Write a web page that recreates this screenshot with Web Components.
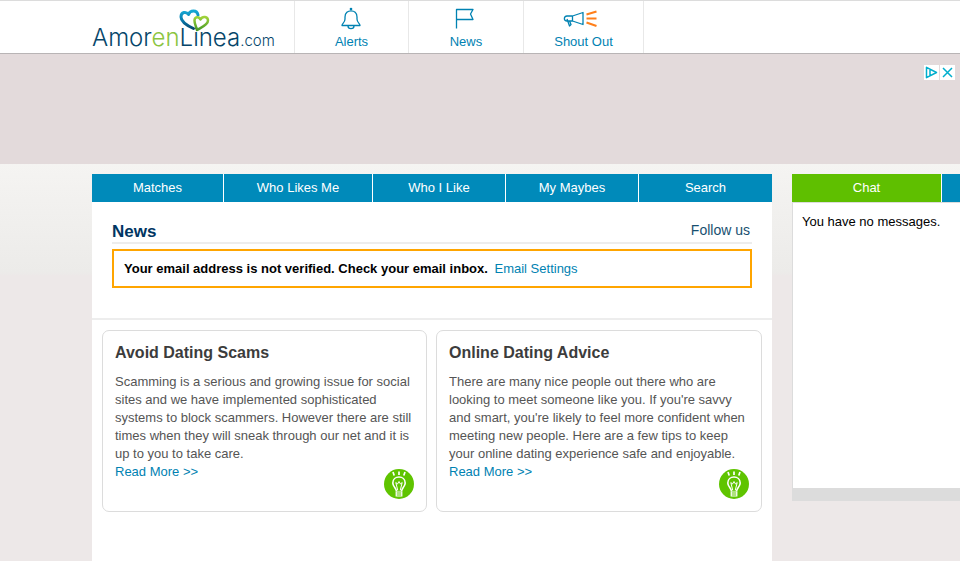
<!DOCTYPE html>
<html lang="en">
<head>
<meta charset="utf-8">
<meta name="viewport" content="width=device-width, initial-scale=1">
<title>AmorenLinea.com - News</title>
<style>
html { min-height: 100%; background: #ede8e8; }
body { margin: 0; font: 13px/18px "Liberation Sans", Arial, sans-serif; color: #000; --link: #0082b2; --blue: #008aba; --green: #5fbf00; --navy: #003562; }
</style>
</head>
<body>
<dating-app></dating-app>
<script>
function define(name, html) {
  const template = document.createElement('template');
  template.innerHTML = html;
  customElements.define(name, class extends HTMLElement {
    constructor() {
      super();
      this.attachShadow({ mode: 'open' }).append(template.content.cloneNode(true));
    }
    connectedCallback() {
      const link = this.shadowRoot.querySelector('a[data-host]');
      if (link) link.href = this.getAttribute('href') || '#';
    }
  });
}

define('site-logo', `
<style>
:host { display: block; }
a { position: relative; display: block; padding-top: 23px; color: #06466a; text-decoration: none; white-space: nowrap; font: 300 24px/28px Inter, Lato, sans-serif; }
.en { color: #8bc53f; }
small { font-size: 15px; line-height: 16px; }
svg { position: absolute; left: 86px; top: 7px; }
</style>
<a href="#" aria-label="AmorenLinea.com">
  <svg width="32" height="24" viewBox="0 0 32 24" fill="none" stroke-linejoin="round" stroke-linecap="round">
    <defs><linearGradient id="h" x1="0" y1="0" x2="0" y2="1"><stop offset="0" stop-color="#17a8d4"/><stop offset=".55" stop-color="#0878a9"/><stop offset="1" stop-color="#064b72"/></linearGradient>
    <linearGradient id="g" x1="0" y1="0" x2="0" y2="1"><stop offset="0" stop-color="#a0d33a"/><stop offset="1" stop-color="#489a26"/></linearGradient></defs>
    <path d="M15.500 20.500C10 18 3 14 3 9C3 4 8 3 10.500 6.500C12 2 19 1.500 20 7" stroke="url(#h)" stroke-width="3"/>
    <path d="M19 22C18 18 16.500 16 16.500 12.500C16.500 8.500 21 8 22.500 11.500C24.500 7.500 30 8.500 30 12.500C30 17 23 19.500 19 22Z" stroke="url(#g)" stroke-width="2.500"/>
  </svg>Amor<span class="en">en</span>Linea<small>.com</small>
</a>`);

define('header-link', `
<style>
:host { display: block; box-sizing: border-box; border-right: 1px solid #e8e8e8; }
a { display: flex; flex-direction: column; align-items: center; padding-top: 6px; color: var(--link); text-decoration: none; line-height: 18px; }
::slotted(svg) { display: block; height: 26px; }
</style>
<a data-host href="#"><slot name="icon"></slot><slot></slot></a>`);

define('site-header', `
<style>
:host { display: flex; box-sizing: border-box; min-height: 54px; padding-left: 92px; background: #fff; border-top: 1px solid #dcdcdc; border-bottom: 1px solid #b8b4b5; }
site-logo { box-sizing: border-box; width: 203px; border-right: 1px solid #e8e8e8; }
nav { display: grid; grid-template-columns: 114px 115px 120px; }
svg { fill: none; stroke: #0082b2; stroke-width: 1.300; stroke-linejoin: round; overflow: visible; }
</style>
<site-logo></site-logo>
<nav aria-label="Account">
  <header-link href="#alerts"><svg slot="icon" width="24" height="26" viewBox="1 1 24 26"><path d="M12 2v2M6 13V11C6 2.700 18 2.700 18 11V13C18 17 21 17 21 19.500H3C3 17 6 17 6 13ZM9 20C9 23.500 15 23.500 15 20"/><circle cx="12" cy="3" r=".7"/></svg>Alerts</header-link>
  <header-link href="#news"><svg slot="icon" width="24" height="26" viewBox="1 1 24 26"><path d="M3.500 22.500V3.500H20L17.500 8L20 13.500H3.500"/></svg>News</header-link>
  <header-link href="#shout"><svg slot="icon" width="36" height="26" viewBox="4 1 36 26"><path d="M10.500 10L21 6.500V18.500L10.500 15ZM10.500 10H5C1.500 10 1.500 15 5 15H10.500M5 13L7.500 20L9 18.500L7.500 15"/><path d="M24.500 8.500L34.500 5.500M24.500 12.500H34.500M24.500 16.500L34.500 20" stroke="#ff7f1a" stroke-width="2"/></svg>Shout Out</header-link>
</nav>`);

define('ad-banner', `
<style>
:host { display: flex; box-sizing: border-box; min-height: 110px; justify-content: flex-end; align-items: flex-start; gap: 1px; padding: 11px 5px; background: #e3dadb; }
button { display: block; width: 15px; height: 15px; padding: 0; border: 0; background: #fff; }
svg { display: block; fill: none; stroke: #00aecd; stroke-width: 1.500; }
</style>
<button type="button" aria-label="About this ad"><svg width="15" height="15" viewBox="0 0 15 15"><path d="M2.500 2.300L12.500 7.500L2.500 12.700ZM6 5V10.500" stroke-linejoin="round"/></svg></button>
<button type="button" aria-label="Close ad"><svg width="15" height="15" viewBox="0 0 15 15"><path d="M3 3L12 12M12 3L3 12"/></svg></button>`);

define('nav-tab', `
<style>
:host { display: block; background: var(--blue); }
:host([active]) { background: var(--green); }
a { display: block; line-height: 28px; min-height: 28px; color: #fff; text-align: center; text-decoration: none; white-space: nowrap; }
</style>
<a data-host href="#"><slot></slot></a>`);

define('tip-card', `
<style>
:host { display: flex; flex-direction: column; box-sizing: border-box; padding: 12px 11px 11px 12px; border: 1px solid #dcdcdc; border-radius: 7px; background: #fff; color: #555; }
h2 { margin: 0 0 10px; font-size: 16px; line-height: 20px; color: #3c3c3c; }
p { margin: 0; }
a { color: var(--link); text-decoration: none; }
svg { display: block; align-self: flex-end; margin-top: auto; }
div { margin-bottom: -13px; }
</style>
<h2><slot name="title"></slot></h2>
<div><p><slot></slot></p><a href="#more">Read More &gt;&gt;</a></div>
<svg width="32" height="32" viewBox="0 0 32 32" fill="none" stroke="#fff" stroke-width="1.600" aria-hidden="true"><circle cx="16" cy="16" r="15" fill="#5fc400" stroke="none"/><path d="M13.500 23.500C13.500 20 9.800 19 9.800 15C9.800 7 22.200 7 22.200 15C22.200 19 18.500 20 18.500 23.500"/><path d="M14.800 22.500L12.800 14.500L14.500 16L16 13.500L17.500 16L19.200 14.500L17.200 22.500" stroke-width="1"/><path d="M10 4L11.200 7.500M16 3.500V7M22 4L20.800 7.500" stroke-width="1.700"/><path d="M13.200 24H18.800V28H13.200ZM13.200 26H18.800" stroke-width="1.200"/></svg>`);

define('news-panel', `
<style>
:host { display: flex; flex-direction: column; background: #fff; }
nav { display: grid; grid-template-columns: 131fr 148fr 132fr 132fr 133fr; gap: 1px; }
section { padding: 20px 20px 30px; border-bottom: 2px solid #ededed; }
header { display: flex; justify-content: space-between; padding-right: 2px; }
.rule { height: 2px; margin-bottom: 5px; background: #ededed; }
h1 { margin: 0; font-size: 17px; line-height: 20px; color: var(--navy); }
header a { font-size: 14px; line-height: 16px; color: #174f70; text-decoration: none; }
.notice { padding: 9px 10px 8px; border: 2px solid #ffa500; }
.notice a { margin-left: 3px; color: var(--link); text-decoration: none; }
.cards { display: grid; grid-template-columns: 325fr 326fr; gap: 9px; padding: 10px; }
</style>
<nav aria-label="Matches"><nav-tab href="#matches">Matches</nav-tab><nav-tab href="#likes">Who Likes Me</nav-tab><nav-tab href="#like">Who I Like</nav-tab><nav-tab href="#maybes">My Maybes</nav-tab><nav-tab href="#search">Search</nav-tab></nav>
<section>
  <header><h1>News</h1><a href="#follow">Follow us</a></header>
  <div class="rule"></div>
  <div class="notice"><b>Your email address is not verified. Check your email inbox.</b> <a href="#settings">Email Settings</a></div>
</section>
<div class="cards">
  <tip-card><span slot="title">Avoid Dating Scams</span>Scamming is a serious and growing issue for social sites and we have implemented sophisticated systems to block scammers. However there are still times when they will sneak through our net and it is up to you to take care.</tip-card>
  <tip-card><span slot="title">Online Dating Advice</span>There are many nice people out there who are looking to meet someone like you. If you're savvy and smart, you're likely to feel more confident when meeting new people. Here are a few tips to keep your online dating experience safe and enjoyable.</tip-card>
</div>`);

define('chat-panel', `
<style>
:host { display: block; overflow: hidden; }
nav { display: grid; grid-template-columns: 149px 149px; gap: 1px; background: #fff; }
.messages { box-sizing: border-box; min-height: 299px; padding: 10px 9px; border: solid #dcdcdc; border-width: 1px 0 13px 1px; background: #fff; white-space: nowrap; }
p { margin: 0; }
</style>
<nav aria-label="Messages"><nav-tab active href="#chat">Chat</nav-tab><nav-tab href="#online"></nav-tab></nav>
<div class="messages"><p>You have no messages.</p></div>`);

define('dating-app', `
<style>
:host { display: flex; flex-direction: column; min-height: 100vh; }
main { flex: 1; display: flex; gap: 20px; padding: 10px 0 0 92px; background: linear-gradient(#f5f4f2, #ecebe9 108px, #ede8e8 112px, #ede8e8); }
news-panel { flex: 1 1 680px; max-width: 680px; min-width: 0; }
chat-panel { flex: 1 1 168px; max-width: 300px; min-width: 0; align-self: flex-start; }
</style>
<site-header></site-header>
<ad-banner></ad-banner>
<main><news-panel></news-panel><chat-panel></chat-panel></main>`);
</script>
</body>
</html>
